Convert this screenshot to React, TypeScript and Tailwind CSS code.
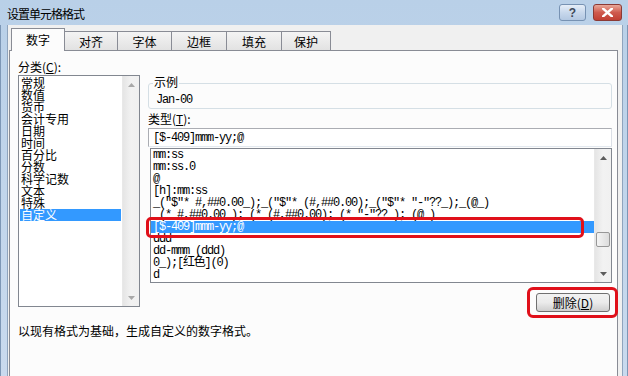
import React from "react";

const CJK = { fontFamily: '"Noto Sans CJK SC", "Noto Sans", sans-serif' };
const MONO = { fontFamily: '"Liberation Mono", "Noto Sans CJK SC", monospace' };

function UpArrow({ color = "#5c5c5c" }: { color?: string }) {
  return (
    <svg width="7" height="4" viewBox="0 0 7 4">
      <path d="M0 4 L3.5 0 L7 4 Z" fill={color} />
    </svg>
  );
}
function DownArrow({ color = "#5c5c5c" }: { color?: string }) {
  return (
    <svg width="7" height="4" viewBox="0 0 7 4">
      <path d="M0 0 L3.5 4 L7 0 Z" fill={color} />
    </svg>
  );
}

function ScrollBar({ thumbTop, thumbH, arrowColor }: { thumbTop?: number; thumbH?: number; arrowColor: string }) {
  return (
    <div className="w-[17px] h-full flex flex-col bg-gradient-to-r from-[#e5e5e5] via-[#f2f2f2] to-[#f0f0f0] border-l border-[#e8e8e8]">
      <div className="h-[17px] flex items-center justify-center shrink-0">
        <UpArrow color={arrowColor} />
      </div>
      <div className="flex-1 relative">
        {thumbTop !== undefined && (
          <div
            className="absolute left-[1px] right-[1px] rounded-[2px] border border-[#979797] bg-gradient-to-r from-[#f4f4f4] to-[#dcdcdc]"
            style={{ top: thumbTop, height: thumbH }}
          />
        )}
      </div>
      <div className="h-[17px] flex items-center justify-center shrink-0">
        <DownArrow color={arrowColor} />
      </div>
    </div>
  );
}

export default function App() {
  const cats = ["常规", "数值", "货币", "会计专用", "日期", "时间", "百分比", "分数", "科学记数", "文本", "特殊", "自定义"];
  const types = [
    "mm:ss",
    "mm:ss.0",
    "@",
    "[h]:mm:ss",
    '_("$"* #,##0.00_);_("$"* (#,##0.00);_("$"* "-"??_);_(@_)',
    '_(* #,##0.00_);_(* (#,##0.00);_(* "-"??_);_(@_)',
    "[$-409]mmm-yy;@",
    "ddd",
    "dd-mmm (ddd)",
    "0_);[红色](0)",
    "d",
  ];
  const tabs = [
    { t: "数字", w: 54 },
    { t: "对齐", w: 54 },
    { t: "字体", w: 55 },
    { t: "边框", w: 56 },
    { t: "填充", w: 56 },
    { t: "保护", w: 50 },
  ];

  return (
    <div className="relative w-[628px] h-[376px] overflow-hidden bg-gradient-to-b from-[#b9d0e8] to-[#c9daee] text-black" style={CJK}>
      {/* Title bar */}
      <div className="h-[25px] flex items-start justify-between">
        <div className="pl-[7px] pt-[7px] text-[12px] leading-[14px] tracking-[-1px]">设置单元格格式</div>
        <div className="flex gap-[7px] pt-[4px] pr-[6px]">
          <div className="w-[27px] h-[17px] rounded-[3px] border border-[#7792b3] bg-gradient-to-b from-[#e6eef8] via-[#c8d8ec] to-[#b3c8e2] flex items-center justify-center text-[12px] leading-none font-bold text-[#3f4a5a]" style={{ fontFamily: '"Liberation Sans", sans-serif' }}>
            ?
          </div>
          <div className="w-[29px] h-[17px] rounded-[3px] border border-[#8b3a35] bg-gradient-to-b from-[#e8a89a] via-[#cf5a4e] to-[#c13f33] flex items-center justify-center">
            <svg width="11" height="9" viewBox="0 0 11 9">
              <path d="M1 0.5 L10 8.5 M10 0.5 L1 8.5" stroke="#ffffff" strokeWidth="2.4" strokeLinecap="square" />
            </svg>
          </div>
        </div>
      </div>

      {/* Body */}
      <div className="flex h-[351px]">
        <div className="w-[7px] border-l border-[#7d97b6]" />
        <div className="w-[616px] bg-[#f0f0f0] border-l border-r border-[#8fa4bd] flex flex-col">
          {/* tabs */}
          <div className="h-[25px] flex items-end pl-[3px]">
            {tabs.map((tab, i) =>
              i === 0 ? (
                <div
                  key={tab.t}
                  className="relative z-10 -mb-px h-[23px] bg-[#fcfcfc] border border-b-0 border-[#898c95] flex items-center justify-center text-[12px] leading-[12px]"
                  style={{ width: tab.w }}
                >
                  {tab.t}
                </div>
              ) : (
                <div
                  key={tab.t}
                  className="-ml-px h-[19px] bg-gradient-to-b from-[#f4f4f4] to-[#e2e2e2] border border-b-0 border-[#898c95] flex items-center justify-center text-[12px] leading-[12px] pt-[1px]"
                  style={{ width: tab.w }}
                >
                  {tab.t}
                </div>
              )
            )}
          </div>

          {/* panel */}
          <div className="ml-[1px] w-[609px] flex-1 bg-[#fcfcfc] border border-[#898c95] border-b-0 pl-[8px] pr-[5px]">
            <div className="flex">
              {/* left column */}
              <div className="w-[122px] pt-[10px]">
                <div className="text-[12px] leading-[12px]">
                  分类(<span className="underline">C</span>):
                </div>
                <div className="mt-[2px] h-[232px] bg-white border border-[#828790] flex">
                  <div className="flex-1 pt-[1px]">
                    {cats.map((c, i) =>
                      i === cats.length - 1 ? (
                        <div key={c} className="mx-[1px] h-[12px] leading-[12px] text-[12px] bg-[#3399ff] text-white pl-[1px] whitespace-nowrap">
                          {c}
                        </div>
                      ) : (
                        <div key={c} className="h-[12px] leading-[12px] text-[12px] pl-[2px] whitespace-nowrap">
                          {c}
                        </div>
                      )
                    )}
                  </div>
                  <ScrollBar arrowColor="#a8a8a8" />
                </div>
              </div>

              {/* right column */}
              <div className="ml-[8px] w-[464px] flex flex-col">
                <div className="relative mt-[32px] h-[26px] border border-[#d5dfe5] rounded-[3px]">
                  <div className="absolute left-[4px] top-[-8px] px-[1px] bg-[#fcfcfc] text-[12px] leading-[12px]">示例</div>
                  <div className="pl-[7px] pt-[10px] text-[12px] leading-[12px] tracking-[-1.2px]" style={MONO}>
                    Jan-00
                  </div>
                </div>
                <div className="mt-[4px] text-[12px] leading-[12px]">
                  类型(<span className="underline">T</span>):
                </div>
                <div className="mt-[3px] h-[19px] bg-white border border-[#abadb3] border-r-[#dbdfe6] border-b-[#e3e9ef] pl-[4px] flex items-center text-[12px] leading-[12px] tracking-[-1.2px]" style={MONO}>
                  [$-409]mmm-yy;@
                </div>
                <div className="mt-[1px] ml-[2px] h-[135px] bg-white border border-[#828790] flex overflow-hidden">
                  <div className="flex-1 overflow-hidden">
                    {types.map((t, i) =>
                      i === 6 ? (
                        <div key={i} className="h-[12px] leading-[12px] text-[12px] tracking-[-1.2px] bg-[#3399ff] text-white pl-[2px] whitespace-nowrap" style={MONO}>
                          {t}
                        </div>
                      ) : (
                        <div key={i} className="h-[12px] leading-[12px] text-[12px] tracking-[-1.2px] pl-[2px] whitespace-nowrap" style={MONO}>
                          {t}
                        </div>
                      )
                    )}
                  </div>
                  <ScrollBar thumbTop={66} thumbH={15} arrowColor="#5c5c5c" />
                </div>
                <div className="mt-[10px] self-end mr-[2px] w-[74px] h-[19px] rounded-[3px] border border-[#707070] bg-gradient-to-b from-[#f2f2f2] via-[#ebebeb] to-[#cfcfcf] flex items-center justify-center text-[12px] leading-[12px]">
                  删除(<span className="underline">D</span>)
                </div>
              </div>
            </div>
            <div className="mt-[13px] text-[12px] leading-[12px] whitespace-nowrap">以现有格式为基础，生成自定义的数字格式。</div>
          </div>
        </div>
        <div className="flex-1 border-r border-[#7d97b6]" />
      </div>

      {/* red highlight annotations */}
      <div className="absolute left-[146px] top-[217px] w-[438px] h-[21px] border-[3px] border-[#e0101a] rounded-[5px] pointer-events-none" />
      <div className="absolute left-[527px] top-[287px] w-[91px] h-[31px] border-[3px] border-[#e0101a] rounded-[6px] pointer-events-none" />
    </div>
  );
}
